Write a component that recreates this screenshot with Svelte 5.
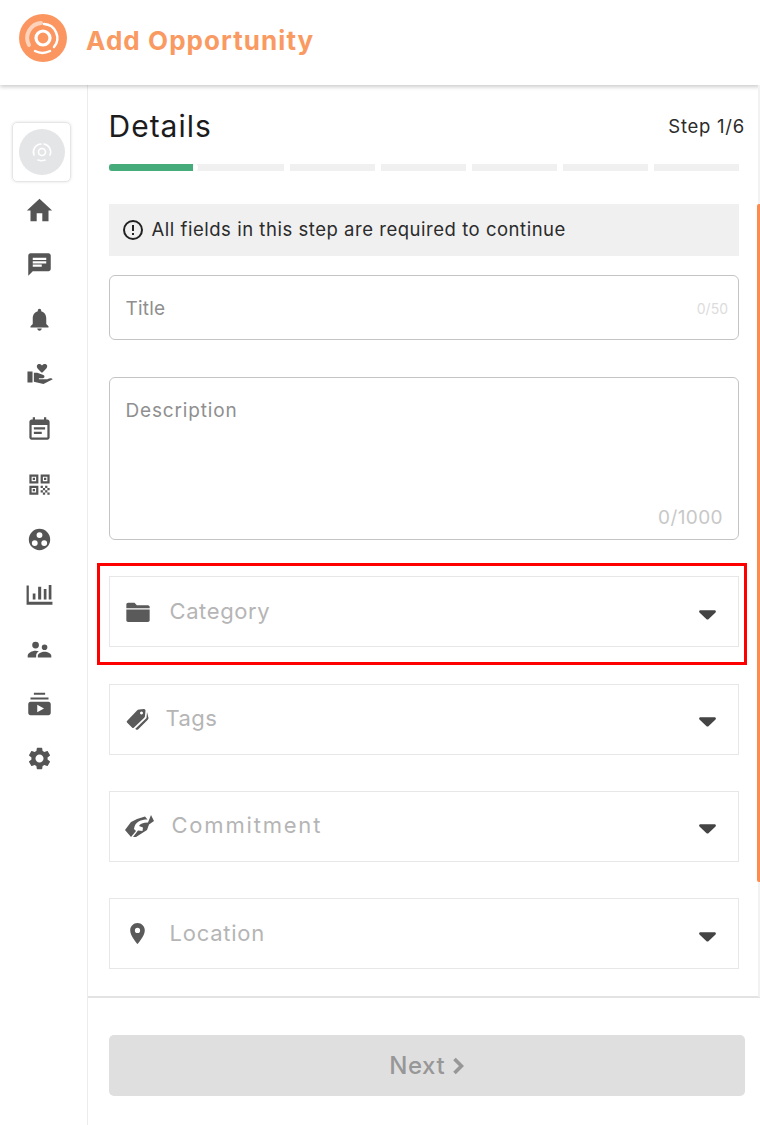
<!--
  Add Opportunity: step 1 of the form.
-->
<script lang="ts">
  const navIcons = [
    { id: 'home', d: 'M9.500 21.500v-7h5v7h5.500V12h3.200L12 1.500.8 12H4v9.500z' },
    { id: 'chat', d: 'M20 2H4c-1.1 0-1.99.9-1.99 2L2 22l4-4h14c1.1 0 2-.9 2-2V4c0-1.1-.9-2-2-2zM6 9h12v2H6V9zm8 5H6v-2h8v2zm4-6H6V6h12v2z' },
    { id: 'bell', d: 'M12 22c1.1 0 2-.9 2-2h-4c0 1.1.89 2 2 2zm6-6v-5c0-3.07-1.64-5.64-4.5-6.32V4c0-.83-.67-1.5-1.5-1.5s-1.5.67-1.5 1.5v.68C7.63 5.36 6 7.92 6 11v5l-2 2v1h16v-1l-2-2z' },
    { id: 'volunteer', d: 'M14.200 4C13.400 2.600 11 1.800 9.800 3.800 8.800 6 12 8.500 14.200 10.500 16.500 8.500 19.500 6 18.700 3.800 17.500 1.800 15 2.600 14.200 4zM1.300 9.300h4.500V19H1.300zM7 10.500h3l5.500 2c1.500.8 1 2.800-.5 2.800h-3.500v1H19c2-1.500 4-1.300 4.800 0l-8.300 4.200L7 18.500z' },
    { id: 'event', d: 'M17 10H7v2h10v-2zm2-7h-1V1h-2v2H8V1H6v2H5c-1.11 0-1.99.9-1.99 2L3 19c0 1.1.89 2 2 2h14c1.1 0 2-.9 2-2V5c0-1.1-.9-2-2-2zm0 16H5V8h14v11zm-5-5H7v2h7v-2z' },
    { id: 'qr', d: 'M3 11h8V3H3v8zm2-6h4v4H5V5zM3 21h8v-8H3v8zm2-6h4v4H5v-4zM13 3v8h8V3h-8zm6 6h-4V5h4v4zM19 19h2v2h-2zM13 13h2v2h-2zM15 15h2v2h-2zM13 17h2v2h-2zM15 19h2v2h-2zM17 17h2v2h-2zM17 13h2v2h-2zM19 15h2v2h-2zM6 6h2v2H6zM6 16h2v2H6zM16 6h2v2h-2z' },
    { id: 'groups', d: 'M12 2.500a9.500 9.500 0 1 0 0 19 9.500 9.500 0 0 0 0-19zM12 5.500a2.600 2.600 0 1 1 0 5.200 2.600 2.600 0 0 1 0-5.200zM7.800 12.600a2.600 2.600 0 1 1 0 5.200 2.600 2.600 0 0 1 0-5.200zM16.200 12.600a2.600 2.600 0 1 1 0 5.200 2.600 2.600 0 0 1 0-5.200z' },
    { id: 'analytics', d: 'M.5 4h2v14.400h21V21H.5zM6 11h2.400v5.500H6zM10.800 5h2.700v11.500h-2.700zM15.800 7h2.400v9.500h-2.400zM20.200 3.500h2.400v13h-2.400z' },
    { id: 'people', d: 'M8.500 5a3 3 0 1 1 0 6 3 3 0 0 1 0-6zM16.500 7.500a2.500 2.500 0 1 1 0 5 2.500 2.500 0 0 1 0-5zM1.500 19v-1.500c0-2.600 4-4.500 7-4.500 1 0 2 .2 3 .6-1.400.9-2.500 2.200-2.500 3.900V19zM10.500 19v-1.500c0-1.900 3.200-3.500 6-3.500s6 1.600 6 3.500V19z' },
    { id: 'subscriptions', d: 'M7 1.500h10v1.800H7zM4 5.800h16v1.800H4zM22 11.500v8c0 1-.9 2-2 2H4c-1.100 0-2-1-2-2v-8c0-1.100.9-2 2-2h16c1.100 0 2 .9 2 2zM16 15.500l-6-3.300v6.600z' },
    { id: 'settings', d: 'M19.14 12.94c.04-.3.06-.61.06-.94 0-.32-.02-.64-.07-.94l2.03-1.58c.18-.14.23-.41.12-.61l-1.92-3.32c-.12-.22-.37-.29-.59-.22l-2.39.96c-.5-.38-1.03-.7-1.62-.94l-.36-2.54c-.04-.24-.24-.41-.48-.41h-3.84c-.24 0-.43.17-.47.41l-.36 2.54c-.59.24-1.13.57-1.62.94l-2.39-.96c-.22-.08-.47 0-.59.22L2.74 8.87c-.12.21-.08.47.12.61l2.03 1.58c-.05.3-.09.63-.09.94s.02.64.07.94l-2.03 1.58c-.18.14-.23.41-.12.61l1.92 3.32c.12.22.37.29.59.22l2.39-.96c.5.38 1.03.7 1.62.94l.36 2.54c.05.24.24.41.48.41h3.84c.24 0 .44-.17.47-.41l.36-2.54c.59-.24 1.13-.56 1.62-.94l2.39.96c.22.08.47 0 .59-.22l1.92-3.32c.12-.22.07-.47-.12-.61l-2.01-1.58zM12 15.600c-1.98 0-3.600-1.620-3.600-3.600s1.620-3.600 3.600-3.600 3.600 1.620 3.600 3.600-1.620 3.600-3.600 3.600z' }
  ];

  const selects = [
    {
      label: 'Category', left: 14, width: 28, height: 28, gap: 18, track: 0.6, view: '0 0 24 24',
      d: 'M2 5.500C2 4.700 2.700 4 3.500 4H9l2 2.200h9.500c.8 0 1.500.7 1.500 1.500v1H2zM2 9.800h20V19c0 .8-.7 1.500-1.500 1.500h-17C2.700 20.500 2 19.800 2 19z'
    },
    {
      label: 'Tags', left: 9, width: 40, height: 36, gap: 7, track: 0.4, view: '0 0 40 36',
      d: 'M8 20L18 9.500Q19 8.500 20 8.500L25 8Q26.500 8 26.500 9.500L26 15Q26 16 25 17L15 26.500Q14 27.500 13 26.500L8 21.500Q7.300 20.700 8 20ZM22.500 10.500a1.500 1.500 0 1 0 .01 0ZM28 11L29.500 17Q29.500 18 28.500 19L19 28.500Q18 29.200 17 28.500L16.300 27.800L27.500 17Z'
    },
    {
      label: 'Commitment', left: 9, width: 40, height: 34, gap: 13, track: 1.8, view: '0 0 40 34',
      d: 'M6 21L12 13L18 10L26 7.500L28.500 10.500C22 10.500 16 12.500 15 20L17 22L12 28ZM35 12L30 15.500L28 21L17 28L14 28L19 21.500L23.500 22L24 18.500L20 17C21 15 24 13.500 29 13.500L32 6Z'
    },
    {
      label: 'Location', left: 15, width: 25, height: 25, gap: 20, track: 0.75, view: '0 0 24 24',
      d: 'M12 2C8.130 2 5 5.130 5 9c0 5.250 7 13 7 13s7-7.750 7-13c0-3.870-3.130-7-7-7zm0 9.500a2.500 2.500 0 0 1 0-5 2.500 2.500 0 0 1 0 5z'
    }
  ];

  const segments = [2, 1, 1, 1, 1, 1];
</script>

<div class="page">
  <header class="topbar">
    <svg class="logo" viewBox="0 0 48 48" aria-hidden="true">
      <circle cx="24" cy="24" r="24" fill="#fb9660" />
      <path d="M10 31a15 15 0 0 1 12-22" fill="none" stroke="#fdd3bb" stroke-width="4" stroke-linecap="round" />
      <path d="M25 10a14 14 0 0 1 10 23" fill="none" stroke="#fff" stroke-width="2.500" stroke-linecap="round" />
      <path d="M16 37a16 16 0 0 0 15 0" fill="none" stroke="#fff" stroke-width="2.500" stroke-linecap="round" />
      <circle cx="24" cy="24" r="7" fill="#fb9660" stroke="#fff" stroke-width="3.200" />
    </svg>
    <h1>Add Opportunity</h1>
  </header>

  <div class="body">
    <nav class="sidebar">
      <div class="avatar">
        <svg viewBox="0 0 46 46" aria-hidden="true">
          <circle cx="23" cy="23" r="23" fill="#e4e5e7" />
          <circle cx="23" cy="23" r="3.500" fill="none" stroke="#fff" stroke-width="1.600" />
          <path d="M15 26a8 8 0 0 1 7-11M25 15a8 8 0 0 1 6 11M19 31a9 9 0 0 0 7 0" fill="none" stroke="#fff" stroke-width="1.600" stroke-linecap="round" />
        </svg>
      </div>
      <ul>
        {#each navIcons as icon (icon.id)}
          <li>
            <svg viewBox="0 0 24 24" aria-hidden="true"><path d={icon.d} fill-rule="evenodd" /></svg>
          </li>
        {/each}
      </ul>
    </nav>

    <main>
      <div class="form">
        <div class="heading">
          <h2>Details</h2>
          <span class="step">Step 1/6</span>
        </div>

        <div class="progress">
          {#each segments as span, i}
            <div class="seg" style="flex-grow: {span}">
              {#if i === 0}<span class="seg__fill"></span><span class="seg__knob"></span>{/if}
            </div>
          {/each}
        </div>

        <div class="alert">
          <svg viewBox="0 0 24 24" aria-hidden="true">
            <path d="M12 2a10 10 0 1 0 0 20 10 10 0 0 0 0-20zm0 18a8 8 0 1 1 0-16 8 8 0 0 1 0 16zM11 7h2v6h-2zM11 15h2v2h-2z" />
          </svg>
          All fields in this step are required to continue
        </div>

        <div class="field field--title">
          <span class="placeholder">Title</span>
          <span class="count count--sm">0/50</span>
        </div>

        <div class="field field--desc">
          <span class="placeholder">Description</span>
          <span class="count">0/1000</span>
        </div>

        {#each selects as s (s.label)}
          <div class="select">
            <svg
              class="select__icon"
              viewBox={s.view}
              style="width: {s.width}px; height: {s.height}px; margin-left: {s.left}px"
              aria-hidden="true"
            >
              <path d={s.d} fill-rule="evenodd" />
            </svg>
            <span class="select__label" style="margin-left: {s.gap}px; letter-spacing: {s.track}px">{s.label}</span>
            <svg class="select__caret" viewBox="0 0 18 10" aria-hidden="true">
              <path d="M1.500 0h15c1.200 0 1.800 1.400 1 2.300L10 9.400c-.6.6-1.400.6-2 0L.5 2.300C-.3 1.400.3 0 1.500 0z" />
            </svg>
          </div>
        {/each}
      </div>

      <footer class="actions">
        <button type="button" disabled>
          Next
          <svg viewBox="0 0 12 18" aria-hidden="true"><path d="M2.500 2l7 7-7 7" fill="none" stroke="currentColor" stroke-width="3.600" /></svg>
        </button>
      </footer>

      <span class="scroll-track"></span>
      <span class="scroll-thumb"></span>
    </main>
  </div>

  <div class="highlight"></div>
</div>

<style>
  :global(body) {
    margin: 0;
    background: #fff;
  }

  .page {
    position: relative;
    width: 760px;
    height: 1125px;
    overflow: hidden;
    font-family: Inter, "Open Sans", sans-serif;
    color: #222;
  }

  .topbar {
    display: flex;
    align-items: center;
    gap: 19px;
    height: 85px;
    padding: 0 0 9px 19px;
    box-sizing: border-box;
    box-shadow: 0 2px 4px rgba(0, 0, 0, 0.2);
    position: relative;
  }

  .logo {
    width: 48px;
    height: 48px;
  }

  h1 {
    margin: 5px 0 0;
    font-size: 26px;
    font-weight: 700;
    color: #fa9a63;
    letter-spacing: 1.07px;
  }

  .body {
    display: flex;
    height: 1040px;
  }

  .sidebar {
    width: 87px;
    flex-shrink: 0;
    border-right: 1.500px solid #ececec;
    box-sizing: content-box;
    padding-top: 37px;
  }

  .avatar {
    display: flex;
    align-items: center;
    justify-content: center;
    width: 57px;
    height: 58px;
    margin-left: 12px;
    border: 1px solid #e6e6e6;
    border-radius: 5px;
    box-shadow: 0 0 3px rgba(0, 0, 0, 0.12);
  }

  .avatar svg {
    width: 46px;
    height: 46px;
  }

  ul {
    list-style: none;
    margin: 14.500px 0 0;
    padding: 0;
    display: flex;
    flex-direction: column;
    gap: 27.900px;
    align-items: center;
    width: 78px;
  }

  li {
    height: 27px;
  }

  li svg {
    display: block;
    width: 27px;
    height: 27px;
    fill: #555;
  }

  main {
    position: relative;
    flex: 1;
    min-width: 0;
  }

  .form {
    padding: 0 21px 0 20.500px;
    height: 913px;
    box-sizing: border-box;
    border-bottom: 2px solid #e3e3e3;
  }

  .heading {
    display: flex;
    justify-content: space-between;
    align-items: center;
    height: 79px;
    padding-top: 3px;
    box-sizing: border-box;
    margin-right: -6px;
  }

  h2 {
    margin: 0;
    font-size: 30px;
    font-weight: 400;
    color: #1c1c1c;
    letter-spacing: 1px;
  }

  .step {
    font-size: 18.500px;
    color: #2b2b2b;
    letter-spacing: 0.75px;
  }

  .progress {
    display: flex;
    gap: 6px;
    height: 7px;
  }

  .seg {
    position: relative;
    flex: 1 1 0;
    background: #f0f0f0;
  }

  .seg:first-child {
    flex-basis: 6px;
  }

  .seg__fill {
    position: absolute;
    left: 0;
    top: 0;
    bottom: 0;
    width: 84px;
    background: #45ab7a;
    border-radius: 3px 0 0 3px;
  }

  .seg__knob {
    position: absolute;
    left: 84px;
    top: 0;
    width: 5px;
    height: 7px;
    background: #fff;
    border-radius: 50%;
  }

  .alert {
    display: flex;
    align-items: center;
    gap: 7px;
    height: 52px;
    margin-top: 33px;
    padding: 0 0 2px 12px;
    box-sizing: border-box;
    background: #f0f0f0;
    font-size: 18.500px;
    letter-spacing: 0.53px;
    color: #2b2b2b;
  }

  .alert svg {
    width: 24px;
    height: 24px;
    fill: #222;
    margin-top: 2px;
  }

  .field {
    position: relative;
    box-sizing: border-box;
    border: 1.500px solid #c4c4c4;
    border-radius: 6px;
    padding-left: 16px;
  }

  .placeholder {
    font-size: 19px;
    color: #8f8f8f;
  }

  .count {
    position: absolute;
    right: 15px;
    bottom: 10px;
    font-size: 19px;
    color: #c8c8c8;
    letter-spacing: 0.4px;
  }

  .count--sm {
    right: 10px;
    bottom: 22px;
    font-size: 14px;
    color: #dcdcdc;
    letter-spacing: 0;
  }

  .field--title {
    display: flex;
    align-items: center;
    height: 65px;
    margin-top: 19px;
    padding-top: 2px;
  }

  .field--title .placeholder {
    letter-spacing: 0.2px;
  }

  .field--desc {
    height: 163px;
    margin-top: 37px;
    padding-top: 21px;
  }

  .field--desc .placeholder {
    letter-spacing: 0.85px;
  }

  .select {
    display: flex;
    align-items: center;
    box-sizing: border-box;
    height: 71px;
    margin-top: 36.340px;
    padding-right: 22px;
    border: 1.500px solid #e7e7e7;
  }

  .select__icon {
    fill: #5a5a5a;
    flex-shrink: 0;
  }

  .select__label {
    flex: 1;
    font-size: 22px;
    color: #b5b5b5;
    margin-top: -2px;
  }

  .select__caret {
    width: 17px;
    height: 10px;
    fill: #444;
    margin-top: 6px;
  }

  .actions {
    padding: 37px 15px 0 20.500px;
  }

  button {
    display: flex;
    align-items: center;
    justify-content: center;
    gap: 7px;
    width: 100%;
    height: 61px;
    padding: 0;
    border: none;
    border-radius: 5px;
    background: #e0dfe0;
    font: inherit;
    font-size: 24px;
    font-weight: 500;
    letter-spacing: 0.6px;
    color: #979797;
  }

  button svg {
    width: 12px;
    height: 18px;
  }

  .scroll-track {
    position: absolute;
    top: 0;
    bottom: 128px;
    right: 0;
    width: 2px;
    background: #f2f2f2;
  }

  .scroll-thumb {
    position: absolute;
    top: 119px;
    right: 0;
    width: 3px;
    height: 678px;
    background: #fb8c4e;
    border-radius: 2px 0 0 2px;
  }

  .highlight {
    position: absolute;
    left: 97px;
    top: 563px;
    width: 650px;
    height: 102px;
    box-sizing: border-box;
    border: 3px solid #f00;
    pointer-events: none;
  }
</style>
